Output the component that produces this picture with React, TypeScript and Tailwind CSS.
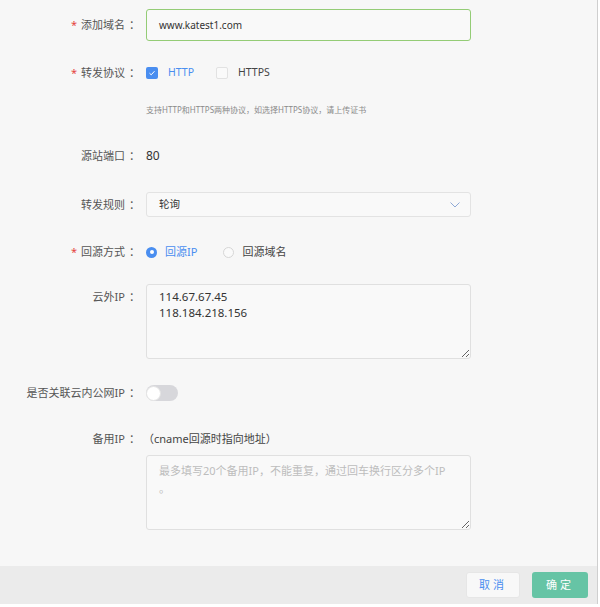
import React from 'react';

const FONT = { fontFamily: '"Noto Sans", "Noto Sans CJK SC", sans-serif' };

const Label = ({ text, required, className = '' }: { text: string; required?: boolean; className?: string }) => (
  <div className={`w-[140px] shrink-0 text-right text-[11px] leading-[20px] text-[#555] ${className}`}>
    {required && <span className="mr-[4px] text-[#e5453e]">*</span>}
    {text}
    <span className="ml-[4px]">：</span>
  </div>
);

const Checkbox = ({ checked, label }: { checked?: boolean; label: string }) => (
  <div className="flex items-center">
    {checked ? (
      <span className="flex h-[12px] w-[12px] items-center justify-center rounded-[2px] bg-[#4a8ef0]">
        <svg width="8" height="8" viewBox="0 0 8 8" fill="none">
          <path d="M1.5 4.2 L3.2 5.8 L6.5 2.2" stroke="#fff" strokeWidth="1" />
        </svg>
      </span>
    ) : (
      <span className="h-[12px] w-[12px] rounded-[2px] border border-[#e2e2e2] bg-[#fafafa]" />
    )}
    <span className={`ml-[10px] text-[10.5px] ${checked ? 'text-[#4a8ef0]' : 'text-[#444]'}`}>{label}</span>
  </div>
);

const Radio = ({ checked, label }: { checked?: boolean; label: string }) => (
  <div className="flex items-center">
    {checked ? (
      <span className="flex h-[11px] w-[11px] items-center justify-center rounded-full bg-[#4a8ef0]">
        <span className="h-[4px] w-[4px] rounded-full bg-white" />
      </span>
    ) : (
      <span className="h-[11px] w-[11px] rounded-full border border-[#d6d6d6] bg-[#fafafa]" />
    )}
    <span className={`ml-[8px] text-[11px] ${checked ? 'text-[#4a8ef0]' : 'text-[#444]'}`}>{label}</span>
  </div>
);

export default function App() {
  return (
    <div className="flex h-[607px] w-[600px] bg-white" style={FONT}>
      <div className="flex h-[604px] w-[598px] flex-col border-r border-[#cfcfcf] bg-[#f7f7f7]">
        <div className="flex flex-1 flex-col pt-[9px]">
          {/* 添加域名 */}
          <div className="flex items-center">
            <Label text="添加域名" required />
            <div className="ml-[6px] flex h-[32px] w-[325px] items-center rounded-[3px] border border-[#94cc76] bg-[#f9f9f9] px-[12px] text-[10px] text-[#333]">
              www.katest1.com
            </div>
          </div>

          {/* 转发协议 */}
          <div className="mt-[22px] flex items-center">
            <Label text="转发协议" required />
            <div className="ml-[6px] flex items-center gap-[22px]">
              <Checkbox checked label="HTTP" />
              <Checkbox label="HTTPS" />
            </div>
          </div>

          <div className="ml-[146px] mt-[20px] text-[8px] leading-[14px] text-[#8a8a8a]">
            支持HTTP和HTTPS两种协议，如选择HTTPS协议，请上传证书
          </div>

          {/* 源站端口 */}
          <div className="mt-[29px] flex items-center">
            <Label text="源站端口" />
            <div className="ml-[6px] text-[12px] text-[#333]">80</div>
          </div>

          {/* 转发规则 */}
          <div className="mt-[26px] flex items-center">
            <Label text="转发规则" />
            <div className="ml-[6px] flex h-[25px] w-[325px] items-center justify-between rounded-[3px] border border-[#e3e3e3] bg-[#f9f9f9] pl-[12px] pr-[10px] text-[10.5px] text-[#333]">
              <span>轮询</span>
              <svg width="10" height="6" viewBox="0 0 10 6" fill="none">
                <path d="M0.5 0.5 L5 5 L9.5 0.5" stroke="#8fa9d6" strokeWidth="1" />
              </svg>
            </div>
          </div>

          {/* 回源方式 */}
          <div className="mt-[25px] flex items-center">
            <Label text="回源方式" required />
            <div className="ml-[6px] flex items-center gap-[26px]">
              <Radio checked label="回源IP" />
              <Radio label="回源域名" />
            </div>
          </div>

          {/* 云外IP */}
          <div className="mt-[22px] flex items-start">
            <Label text="云外IP" className="mt-[3px]" />
            <textarea
              readOnly
              value={'114.67.67.45\n118.184.218.156'}
              className="ml-[6px] h-[75px] w-[325px] rounded-[3px] border border-[#e0e0e0] bg-[#f9f9f9] px-[12px] pt-[4px] text-[11.5px] leading-[16px] text-[#333] outline-none"
            />
          </div>

          {/* 是否关联云内公网IP */}
          <div className="mt-[24px] flex items-center">
            <Label text="是否关联云内公网IP" />
            <div className="ml-[6px] flex h-[16px] w-[32px] items-center rounded-full bg-[#d7d7db]">
              <span className="h-[15px] w-[15px] rounded-full border border-[#e4e4e4] bg-white" />
            </div>
          </div>

          {/* 备用IP */}
          <div className="mt-[26px] flex items-center">
            <Label text="备用IP" />
            <div className="ml-[3px] text-[11px] text-[#444]">（cname回源时指向地址）</div>
          </div>
          <textarea
            readOnly
            placeholder={'最多填写20个备用IP，不能重复，通过回车换行区分多个IP\n。'}
            className="ml-[146px] mt-[6px] h-[75px] w-[325px] rounded-[3px] border border-[#e0e0e0] bg-[#f9f9f9] px-[12px] pt-[6px] text-[11px] leading-[18px] text-[#333] outline-none placeholder:text-[#bdbdbd]"
          />
        </div>

        {/* Footer */}
        <div className="flex h-[38px] items-center justify-end gap-[12px] bg-[#ebebeb] pr-[9px]">
          <button className="h-[26px] w-[54px] rounded-[3px] border border-[#e6e6e6] bg-[#f8f8f8] text-[11px] tracking-[3px] text-[#4a8ef0]">
            取消
          </button>
          <button className="h-[26px] w-[56px] rounded-[3px] bg-[#66c4a5] text-[11px] tracking-[3px] text-white">
            确定
          </button>
        </div>
      </div>
    </div>
  );
}
